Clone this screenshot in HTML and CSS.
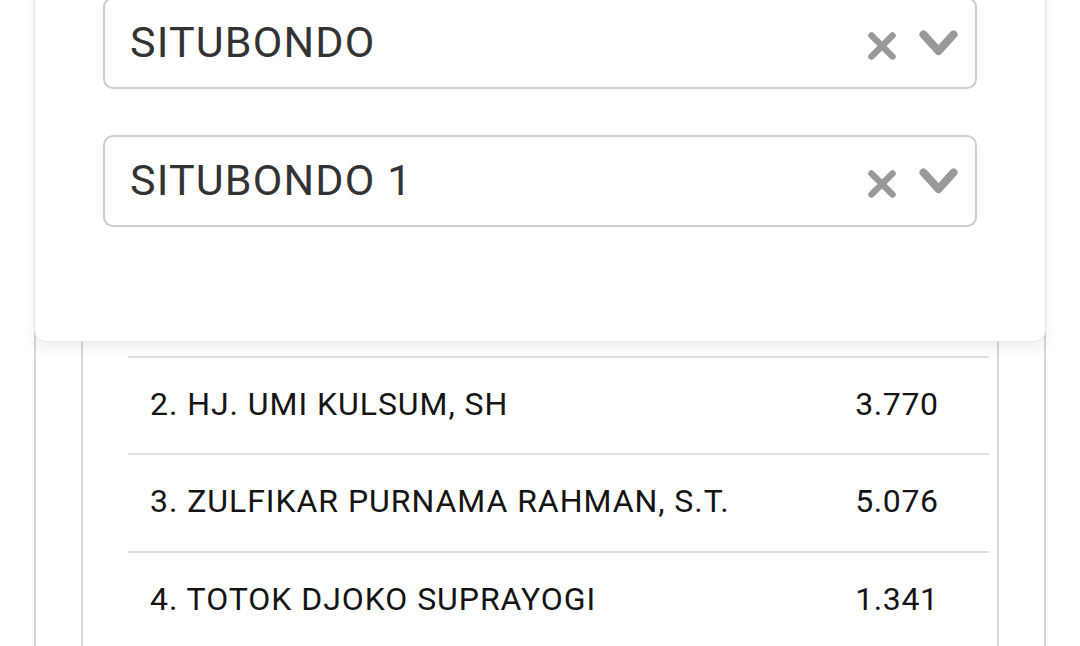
FILE: index.html
```html
<!DOCTYPE html>
<html lang="id">
<head>
<meta charset="utf-8">
<title>Perolehan Suara</title>
<link rel="stylesheet" href="styles.css">
</head>
<body>
<div class="page">
  <div class="panel">
    <div class="list">
      <div class="row"><span class="name">1. H. MOH. NUR KHOLIS</span><span class="votes">2.154</span></div>
      <div class="row"><span class="name">2. HJ. UMI KULSUM, SH</span><span class="votes">3.770</span></div>
      <div class="row"><span class="name">3. ZULFIKAR PURNAMA RAHMAN, S.T.</span><span class="votes">5.076</span></div>
      <div class="row"><span class="name">4. TOTOK DJOKO SUPRAYOGI</span><span class="votes">1.341</span></div>
    </div>
  </div>
</div>

<div class="card">
  <div class="select">
    <span class="value">SITUBONDO</span>
    <span class="icons">
      <svg class="clear" width="28" height="28" viewBox="0 0 28 28"><path d="M3.5 3.5 L24.5 24.5 M24.5 3.5 L3.5 24.5" /></svg>
      <svg class="chev" width="39" height="27" viewBox="0 0 39 27"><path d="M4.5 4.5 L19.5 21 L34.5 4.5" /></svg>
    </span>
  </div>
  <div class="select">
    <span class="value">SITUBONDO 1</span>
    <span class="icons">
      <svg class="clear" width="28" height="28" viewBox="0 0 28 28"><path d="M3.5 3.5 L24.5 24.5 M24.5 3.5 L3.5 24.5" /></svg>
      <svg class="chev" width="39" height="27" viewBox="0 0 39 27"><path d="M4.5 4.5 L19.5 21 L34.5 4.5" /></svg>
    </span>
  </div>
</div>
</body>
</html>
```

FILE: styles.css
```css
* { box-sizing: border-box; }

html, body {
  margin: 0;
  padding: 0;
  background: #ffffff;
  height: 100%;
  overflow: hidden;
  font-family: Roboto, "Noto Sans", "Liberation Sans", sans-serif;
}

.page {
  margin: 0 34px 0 34px;
  height: 100vh;
  border-left: 2px solid #d6d6d6;
  border-right: 2px solid #d6d6d6;
  padding: 0 45px;
}

.panel {
  height: 100%;
  border-left: 2px solid #d6d6d6;
  border-right: 2px solid #d6d6d6;
  padding: 258px 8px 0 45px;
}

.list {
  display: flex;
  flex-direction: column;
}

.row {
  height: 97.5px;
  border-top: 2px solid #e0e0e0;
  display: flex;
  align-items: center;
  justify-content: space-between;
  padding: 0 51px 3px 22px;
  font-size: 32px;
  letter-spacing: 0.95px;
  color: #141414;
}

.votes { letter-spacing: 0.6px; margin-right: -0.6px; }

.card {
  position: absolute;
  top: -24px;
  left: 34px;
  width: 1012px;
  height: 366px;
  background: #ffffff;
  border: 1px solid #e6e6e6;
  border-radius: 12px;
  box-shadow: 0 6px 14px rgba(0, 0, 0, 0.07);
  padding: 20px 68px 0 68px;
  display: flex;
  flex-direction: column;
  gap: 46px;
}

.select {
  height: 92px;
  border: 2px solid #cccccc;
  border-radius: 10px;
  display: flex;
  align-items: center;
  justify-content: space-between;
  padding: 0 17px 0 25px;
}

.value {
  font-size: 43px;
  color: #333333;
  letter-spacing: 1.15px;
  margin-bottom: 3px;
}

.icons {
  display: flex;
  align-items: center;
  gap: 23px;
}

.icons svg path {
  fill: none;
  stroke: #999999;
  stroke-linecap: round;
  stroke-linejoin: round;
}

.clear { margin-top: 6px; }
.clear path { stroke-width: 6.5; }
.chev path { stroke-width: 8; }
```
